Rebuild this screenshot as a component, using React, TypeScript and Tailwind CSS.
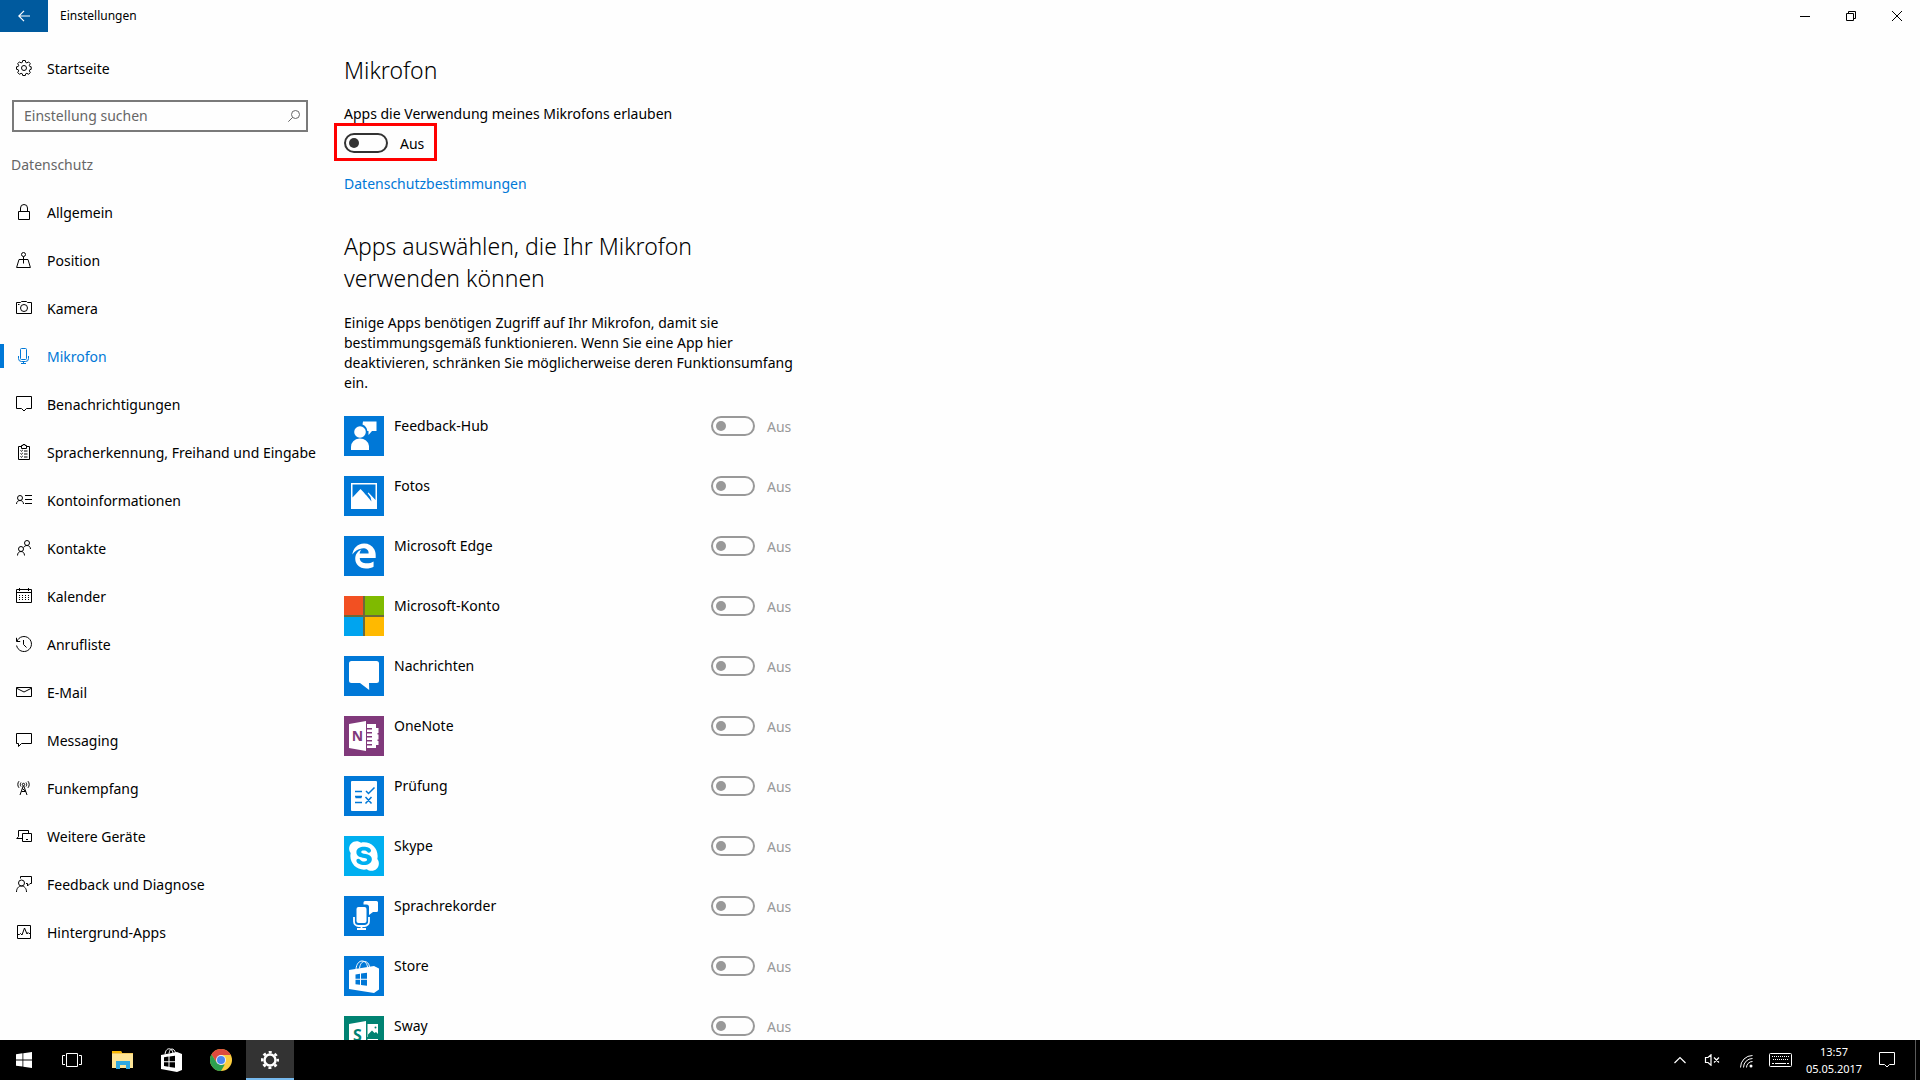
import type { ReactNode } from "react";
import { FaEdgeLegacy, FaSkype } from "react-icons/fa";

type IconName =
  | "lock" | "position" | "camera" | "mic" | "notification" | "clipboard" | "account" | "contacts"
  | "calendar" | "history" | "mail" | "message" | "tower" | "devices" | "feedback" | "activity";

const glyphs: Record<IconName, ReactNode> = {
  lock: <path d="M2.5 7.5h11v8h-11zM4.5 7.5V4a3.5 3.5 0 0 1 7 0v3.5" />,
  position: (
    <>
      <circle cx="7.5" cy="2.5" r="2" />
      <path d="M7.5 4.5v7M5.5 7.5H3l-2.4 8h13.8l-2.4-8H9.5M5 7.5h5" />
    </>
  ),
  camera: (
    <>
      <path d="M.5 2.5h4l1-1h5l1 1h4v11H.5zM2 4.5h1.5" />
      <circle cx="8" cy="8" r="3.5" />
    </>
  ),
  mic: (
    <>
      <rect x="4.5" y=".5" width="6" height="11" rx="1" />
      <path d="M2.5 8v2.5a3 3 0 0 0 3 3h4a3 3 0 0 0 3-3V8M7.5 13.5v2M5 15.5h5" />
    </>
  ),
  notification: <path d="M.5.5h15v12h-5L8 15l-2.5-2.5H.5z" />,
  clipboard: (
    <path d="M5.5 2.5h-3v13h11v-13h-3M5.5 4.5v-3H7V.5h2v1h1.5v3zM4.5 6.5l.8.8L6.8 6M8 7h3.5M4.5 9.5l.8.8L6.8 9M8 10h3.5M4.5 12.5l.8.8L6.800 12M8 13h3.5" />
  ),
  account: (
    <>
      <circle cx="4" cy="6" r="2.5" />
      <path d="M.5 12c0-2.200 1.500-3.500 3.500-3.500s3.500 1.300 3.500 3.500M9 3.500h7M9 7.500h7M9 11.500h7" />
    </>
  ),
  contacts: (
    <>
      <circle cx="11" cy="3" r="2.5" />
      <circle cx="5" cy="9" r="2.5" />
      <path d="M1.500 15.500c0-2.500 1.500-4 3.500-4s3.500 1.500 3.500 4M7.600 7.500C8.300 6.200 9.500 5.500 11 5.500c2 0 3.500 1.500 3.500 3.500" />
    </>
  ),
  calendar: (
    <>
      <path d="M.5 1.5h15v13H.5zM.5 4.5h15M3.5 0v3M12.5 0v3" />
      <path d="M3 7.5h10.5M3 9.5h10.5M3 11.5h10.5" strokeDasharray="1 2" />
    </>
  ),
  history: <path d="M1 5.200A7.500 7.500 0 1 1 .6 9.500M.5 1.800v3.700h3.700M7.500 4v4.500l3 3" />,
  mail: <path d="M.5 3.500h15v9H.5zM.5 4.200 8 8l7.500-3.800" />,
  message: <path d="M.5 1.5h15v10h-10l-3 3v-3h-2z" />,
  tower: (
    <>
      <circle cx="7.5" cy="4.5" r="1.2" />
      <path d="M7.200 6 4 15M7.800 6 11 15M5.500 11.500h4M6.300 8.500l3.500 3M5 2.500c-.9 1.200-.9 3 0 4M10 2.500c.9 1.200.9 3 0 4M3 1.200c-1.600 2-1.600 4.600 0 6.600M12 1.200c1.600 2 1.600 4.600 0 6.600" />
    </>
  ),
  devices: <path d="M6 10.500H.8l1.700-2v-6h10v3M.8 10.500H6M6.500 5.500h9v8h-9zM10 11.500h2" />,
  feedback: (
    <>
      <circle cx="5.500" cy="7" r="3" />
      <path d="M.5 16c0-3.500 2-6 5-6s5 2.500 5 6M4.500 2.500v-2h11v7h-1.500L11.500 10V7.500h-1.500" />
    </>
  ),
  activity: <path d="M1.500 1.500h13v13h-13zM1.500 10.500h2l1-1 1.500 1.500L8.500 4l2.500 6 1-1.500 1 1h1.500" />,
};

function LineIcon({ name }: { name: IconName }) {
  return (
    <svg viewBox="0 0 16 16" className="size-4 shrink-0" fill="none" stroke="currentColor" strokeWidth="1" aria-hidden="true">
      {glyphs[name]}
    </svg>
  );
}

const navItems: { icon: IconName; label: string; active?: boolean }[] = [
  { icon: "lock", label: "Allgemein" },
  { icon: "position", label: "Position" },
  { icon: "camera", label: "Kamera" },
  { icon: "mic", label: "Mikrofon", active: true },
  { icon: "notification", label: "Benachrichtigungen" },
  { icon: "clipboard", label: "Spracherkennung, Freihand und Eingabe" },
  { icon: "account", label: "Kontoinformationen" },
  { icon: "contacts", label: "Kontakte" },
  { icon: "calendar", label: "Kalender" },
  { icon: "history", label: "Anrufliste" },
  { icon: "mail", label: "E-Mail" },
  { icon: "message", label: "Messaging" },
  { icon: "tower", label: "Funkempfang" },
  { icon: "devices", label: "Weitere Geräte" },
  { icon: "feedback", label: "Feedback und Diagnose" },
  { icon: "activity", label: "Hintergrund-Apps" },
];

function Tile({ children, className }: { children: ReactNode; className: string }) {
  return (
    <span className={`flex size-10 shrink-0 items-center justify-center text-white ${className}`} aria-hidden="true">
      {children}
    </span>
  );
}

function Art({ children }: { children: ReactNode }) {
  return (
    <svg viewBox="0 0 40 40" className="size-10" fill="currentColor">
      {children}
    </svg>
  );
}

const apps: { name: string; tile: ReactNode }[] = [
  {
    name: "Feedback-Hub",
    tile: (
      <Tile className="bg-[#0078d7]">
        <Art>
          <circle cx="16" cy="16" r="5.800" />
          <path d="M7 34v-3a9 8 0 0 1 18-1v4zM19 5.500h13.500v9.500H28l-3.500 4V15h-1.200A8 8 0 0 0 18.500 8.500z" />
        </Art>
      </Tile>
    ),
  },
  {
    name: "Fotos",
    tile: (
      <Tile className="bg-[#0078d7]">
        <Art>
          <path fillRule="evenodd" d="M7 7h26v26H7zM8.500 8.500v13l8-8.500 5.500 5.800 2.500-2.300 7 7.500V8.500z" />
          <path d="M20 16.500l7.500 9-1-4.500-3-4z" fill="#0078d7" />
        </Art>
      </Tile>
    ),
  },
  { name: "Microsoft Edge", tile: <Tile className="bg-[#0078d7]"><FaEdgeLegacy className="size-[26px]" /></Tile> },
  {
    name: "Microsoft-Konto",
    tile: (
      <Tile className="bg-[#6b6a3a]">
        <Art>
          <path d="M0 0h19v19H0z" fill="#f25022" />
          <path d="M21 0h19v19H21z" fill="#7fba00" />
          <path d="M0 21h19v19H0z" fill="#00a4ef" />
          <path d="M21 21h19v19H21z" fill="#ffb900" />
        </Art>
      </Tile>
    ),
  },
  {
    name: "Nachrichten",
    tile: (
      <Tile className="bg-[#0078d7]">
        <Art>
          <path d="M7.500 5h25a2.500 2.500 0 0 1 2.500 2.500v17a2.500 2.500 0 0 1-2.500 2.500H25l.2 7L16 27H7.500A2.500 2.500 0 0 1 5 24.500v-17A2.500 2.500 0 0 1 7.500 5z" />
        </Art>
      </Tile>
    ),
  },
  {
    name: "OneNote",
    tile: (
      <Tile className="bg-[#80397b]">
        <Art>
          <path d="M5 8l17-3v30L5 32zM23 8h9v4h2.500v5h-1v1.500h1v5h-1V25h1v4H32v3h-9v-2.500h5V28h-5v-2.500h5V24h-5v-2.500h5V20h-5v-2.500h5V16h-5v-2.500h5V12h-5z" />
          <text x="13.500" y="25" textAnchor="middle" fontSize="14" fontWeight="700" fill="#80397b">N</text>
        </Art>
      </Tile>
    ),
  },
  {
    name: "Prüfung",
    tile: (
      <Tile className="bg-[#0078d7]">
        <Art>
          <rect x="7" y="5" width="26" height="30" rx="1" />
          <path d="M11 15.500h7M11 20.500h7M11 26.500h7M11.500 21.500h6M22 15l2.500 2.500 6-6M21.500 21l6 6.500M27.500 21l-6 6.500" stroke="#0078d7" strokeWidth="1.500" fill="none" />
        </Art>
      </Tile>
    ),
  },
  { name: "Skype", tile: <Tile className="bg-[#00aff0]"><FaSkype className="size-[34px]" /></Tile> },
  {
    name: "Sprachrekorder",
    tile: (
      <Tile className="bg-[#0078d7]">
        <Art>
          <path d="M21 5h11.500a1.500 1.500 0 0 1 1.500 1.500v8a1.500 1.500 0 0 1-1.500 1.500H29l-4 3V11a2.500 2.500 0 0 0-2.500-2.500H19.500V6.500A1.500 1.500 0 0 1 21 5z" />
          <rect x="12.500" y="11" width="10" height="16" rx="2" />
          <path d="M10 21v4.500a4.500 4.500 0 0 0 4.500 4.500h6a4.500 4.500 0 0 0 4.500-4.500V21M17.500 30v3" stroke="currentColor" strokeWidth="1.800" fill="none" />
          <path d="M13 32h9v2h-9z" />
        </Art>
      </Tile>
    ),
  },
  {
    name: "Store",
    tile: (
      <Tile className="bg-[#0078d7]">
        <Art>
          <path d="M5 14l25-4v27L5 33zM30 10l5 2.500v21L30 37z" />
          <path d="M12 13c.5-5 3-8 6-8s5 2.500 5.500 6M15.500 12.500c.5-4.500 2.500-7 5-7 2.500 0 4.500 2 5 5.500" stroke="currentColor" strokeWidth="1" fill="none" />
          <path d="M11.500 18.500l4.500-.7v5h-4.500zM17 17.600l6-.9v6.100h-6zM11.500 23.800H16v5l-4.500-.6zM17 23.800h6v6l-6-.8z" fill="#0078d7" />
        </Art>
      </Tile>
    ),
  },
  {
    name: "Sway",
    tile: (
      <Tile className="bg-[#008272]">
        <Art>
          <path d="M5 8l17-3v30L5 32zM23.500 8H34v13H23.500zM23.500 23H34v9H23.500z" />
          <path d="M24 18.500l4-4 2.500 2.500 1.500-1 2 2V21H24z" fill="#008272" />
          <circle cx="31.500" cy="11.500" r="1" fill="#008272" />
          <text x="13.500" y="25" textAnchor="middle" fontSize="16" fontWeight="700" fill="#008272">S</text>
        </Art>
      </Tile>
    ),
  },
];

function Toggle({ label, disabled = false }: { label: string; disabled?: boolean }) {
  return (
    <label className={`flex h-5 items-center gap-3 ${disabled ? "text-[#999999]" : "text-black"}`}>
      <input
        type="checkbox"
        role="switch"
        aria-label={label}
        disabled={disabled}
        className="flex h-5 w-11 shrink-0 appearance-none items-center rounded-full border-2 border-[#333333] pl-[3px] before:size-[10px] before:rounded-full before:bg-[#333333] disabled:border-[#999999] disabled:before:bg-[#999999]"
      />
      <span className="pt-[2px]">Aus</span>
    </label>
  );
}

function TitleBar() {
  return (
    <header className="flex h-8 shrink-0 items-center">
      <button aria-label="Zurück" className="flex h-8 w-12 items-center justify-center bg-[#005a9e] text-white">
        <svg viewBox="0 0 12 12" className="size-3" fill="none" stroke="currentColor">
          <path d="M12 6H.8M6 .8.8 6 6 11.200" strokeWidth="1.200" />
        </svg>
      </button>
      <span className="ml-3 text-xs">Einstellungen</span>
      <div className="ml-auto flex">
        <button aria-label="Minimieren" className="flex h-8 w-[46px] items-center justify-center">
          <svg viewBox="0 0 10 10" className="size-[10px]" stroke="currentColor"><path d="M0 5.500h10" /></svg>
        </button>
        <button aria-label="Verkleinern" className="flex h-8 w-[46px] items-center justify-center">
          <svg viewBox="0 0 10 10" className="size-[10px]" fill="none" stroke="currentColor">
            <path d="M.5 2.500h7v7h-7zM2.500 2.500v-2h7v7h-2" />
          </svg>
        </button>
        <button aria-label="Schließen" className="flex h-8 w-[46px] items-center justify-center">
          <svg viewBox="0 0 10 10" className="size-[10px]" stroke="currentColor"><path d="M0 0l10 10M10 0L0 10" /></svg>
        </button>
      </div>
    </header>
  );
}

function Sidebar() {
  return (
    <aside className="w-80 shrink-0 pt-3">
      <a href="#start" className="flex h-12 items-center gap-[15px] pl-4">
        <svg viewBox="0 0 16 16" className="size-4 shrink-0" fill="none" stroke="currentColor" aria-hidden="true">
          <path d="M6.700.5h2.600l.4 1.900 1.200.5 1.700-1 1.700 1.800-1 1.600.5 1.200 1.400.3v2.500l-1.400.4-.5 1.200 1 1.600-1.700 1.800-1.700-1-1.200.5-.4 1.700H6.700l-.4-1.700-1.200-.5-1.700 1-1.700-1.800 1-1.600-.5-1.200L.5 9.300V6.800l1.700-.3.5-1.200-1-1.600 1.700-1.800 1.700 1 1.200-.5z" />
          <circle cx="8" cy="8" r="2.500" />
        </svg>
        <span className="pt-[2px]">Startseite</span>
      </a>
      <form className="mx-3 mt-2 flex h-8 items-center border-2 border-[#7a7a7a] pr-1">
        <input
          type="text"
          aria-label="Einstellung suchen"
          placeholder="Einstellung suchen"
          className="h-full min-w-0 flex-1 bg-transparent pb-[2px] pl-[10px] outline-none placeholder:text-[#666666]"
        />
        <button type="button" aria-label="Suchen" className="flex size-4 items-center justify-center text-[#666666]">
          <svg viewBox="0 0 12 12" className="size-3" fill="none" stroke="currentColor">
            <circle cx="7.500" cy="4.500" r="4" />
            <path d="M4.700 7.300.3 11.700" />
          </svg>
        </button>
      </form>
      <h2 className="mt-[23px] pl-[11px] text-[#666666]">Datenschutz</h2>
      <nav className="mt-[13px]">
        <ul>
          {navItems.map((item) => (
            <li key={item.label}>
              <a
                href={`#${item.icon}`}
                aria-current={item.active ? "page" : undefined}
                className={`flex h-12 items-center whitespace-nowrap ${item.active ? "text-[#0078d7]" : ""}`}
              >
                <span className={`mr-3 h-6 w-1 ${item.active ? "bg-[#0078d7]" : ""}`} />
                <LineIcon name={item.icon} />
                <span className="ml-[15px] pt-[2px]">{item.label}</span>
              </a>
            </li>
          ))}
        </ul>
      </nav>
    </aside>
  );
}

function Content() {
  return (
    <main className="min-w-0 flex-1 pt-[22px] pl-6">
      <div className="max-w-[450px]">
        <h1 className="text-[23px]/8 font-light">Mikrofon</h1>
        <p className="mt-[18px]">Apps die Verwendung meines Mikrofons erlauben</p>
        <div className="-mt-px -ml-[10px] flex h-[38px] w-[103px] items-start border-[3px] border-[#ff0000] pt-[7px] pl-[7px]">
          <Toggle label="Apps die Verwendung meines Mikrofons erlauben" />
        </div>
        <a href="#datenschutzbestimmungen" className="mt-[13px] block text-[#0078d7]">Datenschutzbestimmungen</a>
        <h2 className="mt-9 text-[23px]/8 font-light">
          Apps auswählen, die Ihr Mikrofon
          <br />
          verwenden können
        </h2>
        <p className="mt-[19px]">
          Einige Apps benötigen Zugriff auf Ihr Mikrofon, damit sie bestimmungsgemäß funktionieren. Wenn Sie eine App hier
          deaktivieren, schränken Sie möglicherweise deren Funktionsumfang ein.
        </p>
        <ul className="mt-[23px] flex flex-col gap-5">
          {apps.map((app) => (
            <li key={app.name} className="flex h-10 items-start gap-[10px]">
              {app.tile}
              <span className="flex-1">{app.name}</span>
              <div className="w-[83px]">
                <Toggle label={app.name} disabled />
              </div>
            </li>
          ))}
        </ul>
      </div>
    </main>
  );
}

function TaskButton({ label, active = false, children }: { label: string; active?: boolean; children: ReactNode }) {
  return (
    <button
      aria-label={label}
      className={`flex h-10 w-12 items-center justify-center ${active ? "border-b-2 border-[#76b9ed] bg-[#333333] pt-[2px]" : ""}`}
    >
      {children}
    </button>
  );
}

function Taskbar() {
  return (
    <footer className="flex h-10 shrink-0 items-center justify-between bg-black text-white">
      <div className="flex">
        <TaskButton label="Start">
          <svg viewBox="0 0 16 16" className="size-4" fill="currentColor">
            <path d="M0 2.200l6.500-.9v6.200H0zM7.300 1.200 16 0v7.500H7.300zM0 8.400h6.500v6.200L0 13.700zM7.300 8.400H16V16l-8.700-1.200z" />
          </svg>
        </TaskButton>
        <TaskButton label="Aktive Anwendungen">
          <svg viewBox="0 0 20 14" className="h-[14px] w-5" fill="none" stroke="currentColor">
            <path d="M4.500.5h11v13h-11zM3 2.500H.5v9H3M17 2.500h2.500v9H17" />
          </svg>
        </TaskButton>
        <div className="ml-[3px] flex gap-px">
          <TaskButton label="Explorer">
            <svg viewBox="0 0 22 18" className="h-[18px] w-[22px]">
              <path d="M0 0h9l1 2h11v15H0z" fill="#f4c95d" />
              <path d="M0 3h21v14H0z" fill="#fde496" />
              <path d="M0 0h9l1 2H0z" fill="#f9b800" />
              <path d="M4 10h14v8h-4v-4H8v4H4z" fill="#2fa8e0" />
            </svg>
          </TaskButton>
          <TaskButton label="Store">
            <svg viewBox="0 0 22 24" className="h-6 w-[22px]" fill="currentColor">
              <path d="M0 7l16-3v20L0 21zM16 4l5 2v16l-5 2z" />
              <path d="M4 6.500C4.500 2.500 6 .8 8 .8s3.500 1.400 4 4.200M8 5.500C8.500 2.500 9.500 1 11 1s3 1.500 3.500 4" stroke="currentColor" fill="none" />
              <path d="M3 9.300l4.500-.7v4.600H3zM8.500 8.500l5.500-.8v5.500H8.500zM3 14.200h4.500v4.500L3 18zM8.500 14.200H14v5.500l-5.500-.8z" fill="#000" />
            </svg>
          </TaskButton>
          <TaskButton label="Chrome">
            <svg viewBox="0 0 22 22" className="size-[22px]">
              <circle cx="11" cy="11" r="11" fill="#fccd3e" />
              <path d="M1.470 5.500a11 11 0 0 1 19.060 0L20.530 6H11L6.670 13.500z" fill="#dd4b3e" />
              <path d="M1.470 5.500 6.670 13.500 11 16l3.800-.5L11 22A11 11 0 0 1 1.470 5.500z" fill="#2da04f" />
              <circle cx="11" cy="11" r="5" fill="#e8efff" />
              <circle cx="11" cy="11" r="4" fill="#4a86f0" />
            </svg>
          </TaskButton>
          <TaskButton label="Einstellungen" active>
            <svg viewBox="0 0 18 18" className="size-[18px]" fill="none" stroke="currentColor">
              <circle cx="9" cy="9" r="5.500" strokeWidth="2.500" />
              <circle cx="9" cy="9" r="7.800" strokeWidth="2.400" strokeDasharray="3.060 3.066" strokeDashoffset="1.530" />
            </svg>
          </TaskButton>
        </div>
      </div>
      <div className="flex h-full items-center">
        <button aria-label="Ausgeblendete Symbole" className="flex w-8 justify-center">
          <svg viewBox="0 0 12 8" className="h-2 w-3" fill="none" stroke="currentColor"><path d="M.5 7 6 1.500 11.500 7" strokeWidth="1.200" /></svg>
        </button>
        <button aria-label="Lautsprecher" className="flex w-8 justify-center">
          <svg viewBox="0 0 16 12" className="h-3 w-4" fill="none" stroke="currentColor">
            <path d="M1.500 3.500H4L7 .8v10.400L4 8.500H1.500zM10 3.500l5 5M15 3.500l-5 5" strokeWidth="1.200" />
          </svg>
        </button>
        <button aria-label="Netzwerk" className="flex w-9 justify-center pt-[2px]">
          <svg viewBox="0 0 13 13" className="size-[13px]" fill="none" stroke="currentColor">
            <path d="M.5 12.500a12 12 0 0 1 12-12M3.500 12.500a9 9 0 0 1 9-9M6.500 12.500a6 6 0 0 1 6-6" />
            <circle cx="11" cy="11" r="1.500" fill="currentColor" stroke="none" />
          </svg>
        </button>
        <button aria-label="Bildschirmtastatur" className="flex w-8 justify-center">
          <svg viewBox="0 0 23 14" className="h-[14px] w-[23px]" fill="none" stroke="currentColor">
            <rect x=".5" y=".5" width="22" height="13" rx="1" />
            <path d="M3 3.500h17M4 6.500h16" strokeDasharray="1 1" />
            <path d="M3 10.500h2M6 10.500h11M18 10.500h2" />
          </svg>
        </button>
        <button className="flex w-[76px] flex-col items-center text-[11px]/[17px]">
          <span>13:57</span>
          <span>05.05.2017</span>
        </button>
        <button aria-label="Benachrichtigungen" className="mr-5 ml-[7px]">
          <LineIcon name="notification" />
        </button>
        <span className="mr-1 h-full w-px bg-[#5a5a5a]" />
      </div>
    </footer>
  );
}

export default function App() {
  return (
    <div className="flex h-screen flex-col overflow-hidden bg-[#fefefe] font-['Segoe_UI','Noto_Sans',sans-serif] text-sm text-black">
      <TitleBar />
      <div className="flex min-h-0 flex-1 overflow-hidden">
        <Sidebar />
        <Content />
      </div>
      <Taskbar />
    </div>
  );
}
